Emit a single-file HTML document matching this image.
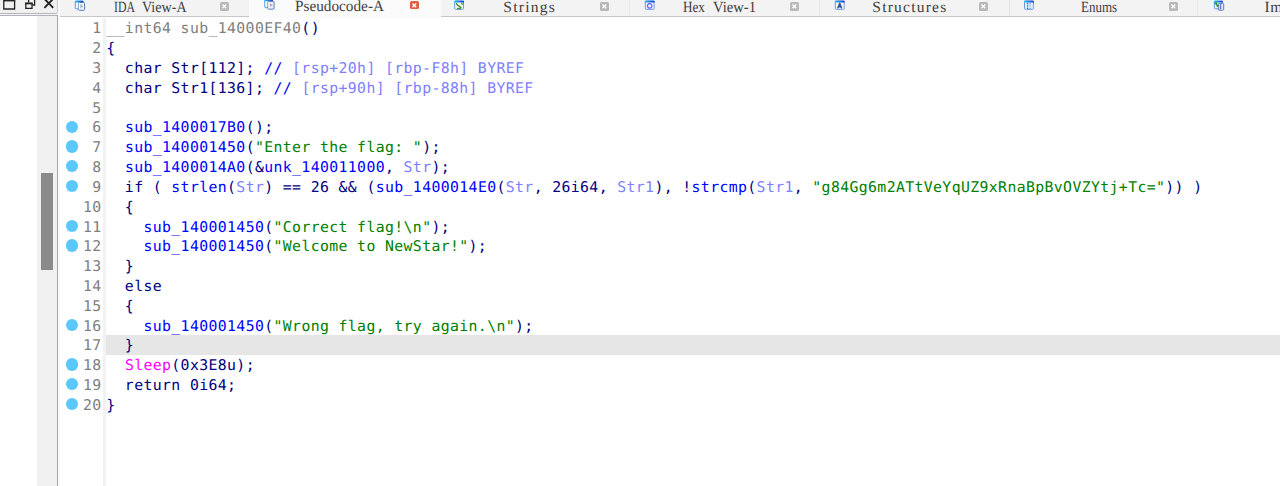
<!DOCTYPE html>
<html lang="en"><head><meta charset="utf-8"><title>IDA - Pseudocode-A</title>
<style>
html,body{margin:0;padding:0;}
body{width:1280px;height:486px;overflow:hidden;background:#fff;position:relative;font-family:"Liberation Sans",sans-serif;}
.abs{position:absolute;}
#tl{left:0;top:0;width:57px;height:13px;background:#f0f0f0;border-bottom:1px solid #b4b6bc;border-right:1px solid #c8cace;border-bottom-right-radius:2px;}
#gap{left:0;top:14px;width:58px;height:1.2px;background:#f4f4f4;}
#lp{left:0;top:15px;width:57px;height:480px;background:#fff;border-top:1px solid #aeb2ba;border-right:1px solid #a4a8b2;box-sizing:content-box;}
#lpg{left:36.6px;top:16px;width:20.4px;height:480px;background:#f0f0f0;}
#thumb{left:40.5px;top:172.5px;width:12px;height:97px;background:#8a8a8a;}
#strip{left:58px;top:0;width:2px;height:486px;background:#fafafa;}
#tabs{left:60px;top:0;width:1220px;height:16px;background:#f3f3f3;border-bottom:1.8px solid #c8c8c8;}
#act{left:248.5px;top:0;width:192px;height:18px;background:#fbfbfb;}
.tsep{top:0;width:1px;height:16px;background:#e6e6e6;}
.tt{height:16px;line-height:16px;transform-origin:0 50%;display:block;font-family:"Liberation Serif","Noto Serif CJK SC",serif;font-size:15.5px;color:#404040;white-space:pre;text-rendering:geometricPrecision;}
.cb{width:9px;height:8.7px;border-radius:1.6px;background:#b9b9b9;}
.cb.red{background:#de5f42;}
.ic{top:0;width:12px;height:12px;}
#gsep{left:103.4px;top:17.8px;width:2.6px;height:470px;background:#f2f2f2;}
#hl{left:105.5px;top:335.3px;width:1175px;height:19.3px;background:#e6e6e6;}
.ln,.cd{font-family:"DejaVu Sans Mono", "Liberation Mono", monospace;font-size:14.8px;line-height:19.82px;height:19.82px;white-space:pre;letter-spacing:0.38px;text-rendering:geometricPrecision;}
.ln{left:60px;width:41.5px;text-align:right;color:#808080;}
.cd{left:106.3px;color:#000080;}
.g{color:#808080}.b{color:#0000ff}.s{color:#008000}.v{color:#8080ff}.m{color:#ff00ff}
.dot{left:65.8px;width:12.2px;height:12.2px;border-radius:50%;background:#5ac8fa;}
</style></head><body>

<div class="abs" id="lp"></div><div class="abs" id="lpg"></div><div class="abs" id="thumb"></div>
<div class="abs" id="gap"></div><div class="abs" id="tl"></div><div class="abs" id="strip"></div>
<svg class="abs" style="left:0;top:0" width="58" height="13" viewBox="0 0 58 13">
<g fill="none" stroke="#222" stroke-width="1.3">
<path d="M3.8 0.2 V9 H14.6 V0.2" /><path d="M3.2 0.6 H15.2" stroke-width="1.6"/>
<path d="M25.8 3.2 H32 V8.4 H25.8 Z"/><path d="M25.2 3.6 H32.6" stroke-width="1.5"/>
<path d="M28.6 2.6 V0 M34.6 0 V5 H32.4"/>
<path d="M44.4 -1.2 L53.2 7.8 M53.2 -1.2 L44.4 7.8" stroke-width="1.9"/>
</g></svg>
<div class="abs" id="tabs"></div><div class="abs" id="act"></div>
<div class="abs tsep" style="left:629px"></div>
<div class="abs tsep" style="left:819px"></div>
<div class="abs tsep" style="left:1009px"></div>
<div class="abs tsep" style="left:1197px"></div>
<svg class="abs" style="left:0;top:0" width="1280" height="16" viewBox="0 0 1280 16"><defs><linearGradient id="tb" x1="0" y1="0" x2="1" y2="0"><stop offset="0" stop-color="#22c4ff"/><stop offset="0.45" stop-color="#2288ee"/><stop offset="1" stop-color="#0c34c8"/></linearGradient></defs><g transform="translate(74.8,0)"><rect x="0.5" y="1.2" width="7.6" height="7.6" rx="0.8" fill="#fff" stroke="#4a9af0" stroke-width="1"/><rect x="0" y="0.8" width="8.6" height="1.6" rx="0.5" fill="url(#tb)"/><rect x="3.6" y="2.5" width="6.2" height="7.8" rx="0.9" fill="#eaf1fa" stroke="#5582b8" stroke-width="1"/><path d="M4.4 3.2 V9.6" stroke="#fff" stroke-width="0.9"/><path d="M5.6 4.3 L8.6 6.2 L5.6 8.2 Z" fill="#a3b0c2"/></g><g transform="translate(264.3,-1.15)"><rect x="0.5" y="1.2" width="7.6" height="7.6" rx="0.8" fill="#fff" stroke="#4a9af0" stroke-width="1"/><rect x="0" y="0.8" width="8.6" height="1.6" rx="0.5" fill="url(#tb)"/><rect x="3.6" y="2.5" width="6.2" height="7.8" rx="0.9" fill="#eaf1fa" stroke="#5582b8" stroke-width="1"/><path d="M4.4 3.2 V9.6" stroke="#fff" stroke-width="0.9"/><path d="M5.6 4.3 L8.6 6.2 L5.6 8.2 Z" fill="#a3b0c2"/></g><g transform="translate(454.2,0)"><rect x="0.5" y="0.9" width="8.8" height="8.4" rx="0.8" fill="#fff" stroke="#6c94e8" stroke-width="1"/><rect x="0" y="0.8" width="9.8" height="1.7" rx="0.5" fill="url(#tb)"/><path d="M2.2 3.6 L3 5 M7.6 3.2 L8 4.2 M3.8 5.4 C5 5.6 5.4 7 6.8 7.4 M3.4 8.4 H6.2" stroke="#3f9a2a" stroke-width="1.5" stroke-linecap="round" fill="none"/></g><g transform="translate(644.8,0)"><rect x="0.5" y="0.9" width="8.8" height="8.4" rx="0.8" fill="#fff" stroke="#6c94e8" stroke-width="1"/><rect x="0" y="0.8" width="9.8" height="1.7" rx="0.5" fill="url(#tb)"/><circle cx="4.9" cy="5.8" r="2.3" fill="#f0f8ff" stroke="#6a6af6" stroke-width="1.3"/><path d="M2.6 4 L3.4 4.6 M7.2 4 L6.4 4.6 M2.6 7.6 L3.4 7 M7.2 7.6 L6.4 7" stroke="#8a8af8" stroke-width="1"/></g><g transform="translate(834.8,0)"><rect x="0.5" y="0.9" width="8.8" height="8.4" rx="0.8" fill="#fff" stroke="#6c94e8" stroke-width="1"/><rect x="0" y="0.8" width="9.8" height="1.7" rx="0.5" fill="url(#tb)"/><path d="M2.9 8.4 L4.9 3.4 L6.9 8.4 M3.7 6.8 H6.1" fill="none" stroke="#2c5a94" stroke-width="1.5" stroke-linejoin="round"/></g><g transform="translate(1024.0,0)"><rect x="0.5" y="0.9" width="8.8" height="8.4" rx="0.8" fill="#fff" stroke="#6c94e8" stroke-width="1"/><rect x="0" y="0.8" width="9.8" height="1.7" rx="0.5" fill="url(#tb)"/><path d="M3.6 2.6 V9" stroke="#6aa8ee" stroke-width="0.8"/><path d="M1.4 4.6 H8.6 M1.4 7.2 H8.6" stroke="#b8dcf8" stroke-width="0.8"/><g fill="#1f7cc8"><circle cx="3.6" cy="3.4" r="0.75"/><circle cx="3.6" cy="5.9" r="0.75"/><circle cx="3.6" cy="8.4" r="0.75"/></g><path d="M5.2 3.4 H7 M5.2 5.9 H7 M5.2 8.4 H7" stroke="#6ab0f0" stroke-width="1"/></g><g transform="translate(1213.9,0)"><rect x="0.5" y="1.2" width="7.6" height="7.6" rx="0.8" fill="#fff" stroke="#6c94e8" stroke-width="1"/><rect x="0" y="0.8" width="9" height="1.6" rx="0.5" fill="url(#tb)"/><rect x="4.4" y="3.4" width="5.4" height="6.8" rx="0.9" fill="#eaf1fa" stroke="#5582b8" stroke-width="1"/><path d="M6.6 4 V9.6" stroke="#7a6ee0" stroke-width="1.5"/><path d="M8.3 4 V9.6" stroke="#cfe2fa" stroke-width="0.9"/><path d="M1.2 3.2 L4.2 5.6 M2.4 2.8 L3.4 6.4" stroke="#1e9a2e" stroke-width="1.5" stroke-linecap="round"/></g></svg>
<span class="abs tt" style="left:113.5px;top:-0.40px;transform:scaleX(0.7583);">IDA </span>
<span class="abs tt" style="left:141.9px;top:-0.40px;transform:scaleX(0.9102);">View-A</span>
<div class="abs cb" style="left:220.25px;top:1.90px"><svg width="8.7" height="8.7" viewBox="0 0 8.7 8.7" style="display:block"><path d="M2.5 2.5 L6.2 6.2 M6.2 2.5 L2.5 6.2" stroke="#fff" stroke-width="1.4" fill="none"/></svg></div>
<span class="abs tt" style="left:295px;top:-1.30px;transform:scaleX(0.9844);">Pseudocode-A</span>
<div class="abs cb red" style="left:409.7px;top:0.75px"><svg width="8.7" height="8.7" viewBox="0 0 8.7 8.7" style="display:block"><path d="M2.5 2.5 L6.2 6.2 M6.2 2.5 L2.5 6.2" stroke="#fff" stroke-width="1.4" fill="none"/></svg></div>
<span class="abs tt" style="left:503.3px;top:-0.40px;letter-spacing:1.260px;">Strings</span>
<div class="abs cb" style="left:599.7px;top:1.90px"><svg width="8.7" height="8.7" viewBox="0 0 8.7 8.7" style="display:block"><path d="M2.5 2.5 L6.2 6.2 M6.2 2.5 L2.5 6.2" stroke="#fff" stroke-width="1.4" fill="none"/></svg></div>
<span class="abs tt" style="left:682.8px;top:-0.40px;transform:scaleX(0.8479);">Hex </span>
<span class="abs tt" style="left:712.8px;top:-0.40px;transform:scaleX(0.9438);">View-1</span>
<div class="abs cb" style="left:790.2px;top:1.90px"><svg width="8.7" height="8.7" viewBox="0 0 8.7 8.7" style="display:block"><path d="M2.5 2.5 L6.2 6.2 M6.2 2.5 L2.5 6.2" stroke="#fff" stroke-width="1.4" fill="none"/></svg></div>
<span class="abs tt" style="left:872.3px;top:-0.40px;letter-spacing:1.232px;">Structures</span>
<div class="abs cb" style="left:979.4px;top:1.90px"><svg width="8.7" height="8.7" viewBox="0 0 8.7 8.7" style="display:block"><path d="M2.5 2.5 L6.2 6.2 M6.2 2.5 L2.5 6.2" stroke="#fff" stroke-width="1.4" fill="none"/></svg></div>
<span class="abs tt" style="left:1080.5px;top:-0.40px;transform:scaleX(0.8406);">Enums</span>
<div class="abs cb" style="left:1169.4px;top:1.90px"><svg width="8.7" height="8.7" viewBox="0 0 8.7 8.7" style="display:block"><path d="M2.5 2.5 L6.2 6.2 M6.2 2.5 L2.5 6.2" stroke="#fff" stroke-width="1.4" fill="none"/></svg></div>
<span class="abs tt" style="left:1264.4px;top:-0.40px;letter-spacing:0.630px;">Imports</span>
<div class="abs" id="gsep"></div><div class="abs" id="hl"></div>
<div class="abs ln" style="top:19.30px">1</div>
<div class="abs cd" style="top:19.30px"><span class="g">__int64 sub_14000EF40</span>()</div>
<div class="abs ln" style="top:39.12px">2</div>
<div class="abs cd" style="top:39.12px">{</div>
<div class="abs ln" style="top:58.94px">3</div>
<div class="abs cd" style="top:58.94px">  char Str[112]; <span class="b">// </span><span class="v">[rsp+20h] [rbp-F8h] BYREF</span></div>
<div class="abs ln" style="top:78.76px">4</div>
<div class="abs cd" style="top:78.76px">  char Str1[136]; <span class="b">// </span><span class="v">[rsp+90h] [rbp-88h] BYREF</span></div>
<div class="abs ln" style="top:98.58px">5</div>
<div class="abs dot" style="top:120.50px"></div>
<div class="abs ln" style="top:118.40px">6</div>
<div class="abs cd" style="top:118.40px">  <span class="b">sub_1400017B0</span>();</div>
<div class="abs dot" style="top:140.32px"></div>
<div class="abs ln" style="top:138.22px">7</div>
<div class="abs cd" style="top:138.22px">  <span class="b">sub_140001450</span>(<span class="s">"Enter the flag: "</span>);</div>
<div class="abs dot" style="top:160.14px"></div>
<div class="abs ln" style="top:158.04px">8</div>
<div class="abs cd" style="top:158.04px">  <span class="b">sub_1400014A0</span>(&amp;<span class="b">unk_140011000</span>, <span class="v">Str</span>);</div>
<div class="abs dot" style="top:179.96px"></div>
<div class="abs ln" style="top:177.86px">9</div>
<div class="abs cd" style="top:177.86px">  if ( <span class="b">strlen</span>(<span class="v">Str</span>) == 26 &amp;&amp; (<span class="b">sub_1400014E0</span>(<span class="v">Str</span>, 26i64, <span class="v">Str1</span>), !<span class="b">strcmp</span>(<span class="v">Str1</span>, <span class="s">"g84Gg6m2ATtVeYqUZ9xRnaBpBvOVZYtj+Tc="</span>)) )</div>
<div class="abs ln" style="top:197.68px">10</div>
<div class="abs cd" style="top:197.68px">  {</div>
<div class="abs dot" style="top:219.60px"></div>
<div class="abs ln" style="top:217.50px">11</div>
<div class="abs cd" style="top:217.50px">    <span class="b">sub_140001450</span>(<span class="s">"Correct flag!\n"</span>);</div>
<div class="abs dot" style="top:239.42px"></div>
<div class="abs ln" style="top:237.32px">12</div>
<div class="abs cd" style="top:237.32px">    <span class="b">sub_140001450</span>(<span class="s">"Welcome to NewStar!"</span>);</div>
<div class="abs ln" style="top:257.14px">13</div>
<div class="abs cd" style="top:257.14px">  }</div>
<div class="abs ln" style="top:276.96px">14</div>
<div class="abs cd" style="top:276.96px">  else</div>
<div class="abs ln" style="top:296.78px">15</div>
<div class="abs cd" style="top:296.78px">  {</div>
<div class="abs dot" style="top:318.70px"></div>
<div class="abs ln" style="top:316.60px">16</div>
<div class="abs cd" style="top:316.60px">    <span class="b">sub_140001450</span>(<span class="s">"Wrong flag, try again.\n"</span>);</div>
<div class="abs ln" style="top:336.42px">17</div>
<div class="abs cd" style="top:336.42px">  }</div>
<div class="abs dot" style="top:358.34px"></div>
<div class="abs ln" style="top:356.24px">18</div>
<div class="abs cd" style="top:356.24px">  <span class="m">Sleep</span>(0x3E8u);</div>
<div class="abs dot" style="top:378.16px"></div>
<div class="abs ln" style="top:376.06px">19</div>
<div class="abs cd" style="top:376.06px">  return 0i64;</div>
<div class="abs dot" style="top:397.98px"></div>
<div class="abs ln" style="top:395.88px">20</div>
<div class="abs cd" style="top:395.88px">}</div>
</body></html>
